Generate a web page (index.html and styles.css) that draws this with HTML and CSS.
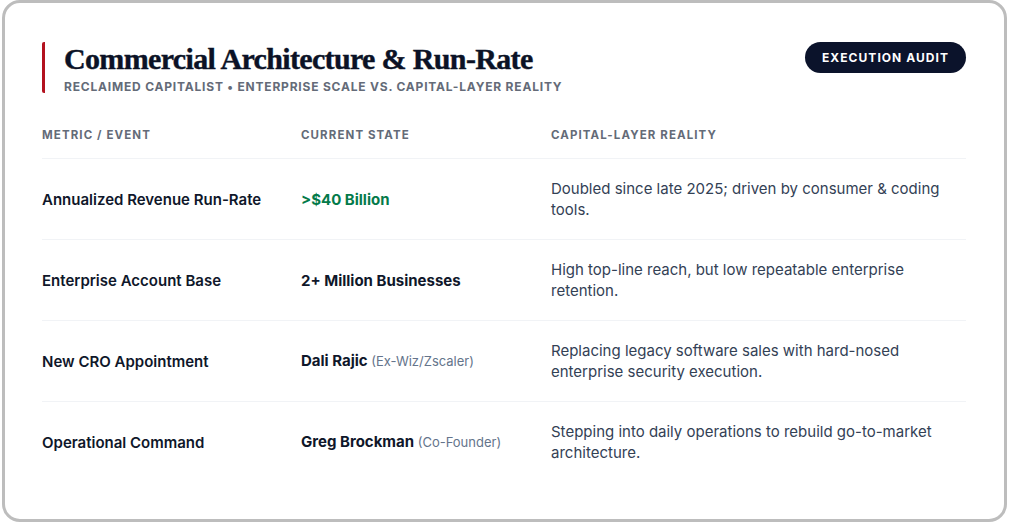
FILE: index.html
```html
<!DOCTYPE html>
<html lang="en">
<head>
<meta charset="utf-8">
<title>Commercial Architecture &amp; Run-Rate</title>
<link rel="stylesheet" href="styles.css">
</head>
<body>
<main class="card">
  <header class="head">
    <div class="titles">
      <h1 class="title">Commercial Architecture &amp; Run-Rate</h1>
      <p class="subtitle">Reclaimed Capitalist • Enterprise Scale vs. Capital-Layer Reality</p>
    </div>
    <span class="badge">Execution Audit</span>
  </header>
  <table class="grid">
    <colgroup>
      <col class="c1"><col class="c2"><col class="c3">
    </colgroup>
    <thead>
      <tr><th>Metric / Event</th><th>Current State</th><th>Capital-Layer Reality</th></tr>
    </thead>
    <tbody>
      <tr>
        <td class="metric">Annualized Revenue Run-Rate</td>
        <td class="state green">&gt;$40 Billion</td>
        <td class="reality">Doubled since late 2025; driven by consumer &amp; coding tools.</td>
      </tr>
      <tr>
        <td class="metric">Enterprise Account Base</td>
        <td class="state">2+ Million Businesses</td>
        <td class="reality">High top-line reach, but low repeatable enterprise retention.</td>
      </tr>
      <tr>
        <td class="metric">New CRO Appointment</td>
        <td class="state">Dali Rajic <span class="note">(Ex-Wiz/Zscaler)</span></td>
        <td class="reality">Replacing legacy software sales with hard-nosed enterprise security execution.</td>
      </tr>
      <tr>
        <td class="metric">Operational Command</td>
        <td class="state">Greg Brockman <span class="note">(Co-Founder)</span></td>
        <td class="reality">Stepping into daily operations to rebuild go-to-market architecture.</td>
      </tr>
    </tbody>
  </table>
</main>
</body>
</html>
```
FILE: styles.css
```css
* { box-sizing: border-box; }
html, body { margin: 0; padding: 0; background: #ffffff; }
body { font-family: Inter, "Noto Sans", sans-serif; color: #0f172a; }

.card {
  margin: 0 2px;
  height: 522px;
  border: 3px solid #bdbdbd;
  border-radius: 18px;
  background: #ffffff;
  padding: 39px 38px 0 37px;
}

.head {
  display: flex;
  justify-content: space-between;
  align-items: flex-start;
}
.titles {
  border-left: 3px solid #b3121f;
  border-radius: 2px;
  padding-left: 19px;
  height: 51px;
}
.title {
  margin: 0;
  font-family: "Liberation Serif", "Times New Roman", serif;
  font-weight: 700;
  font-size: 30px;
  line-height: 34px;
  letter-spacing: -0.65px;
  color: #0b1226;
  -webkit-text-stroke: 0.4px #0b1226;
}
.subtitle {
  margin: 4px 0 0;
  font-size: 12px;
  line-height: 14px;
  font-weight: 700;
  letter-spacing: 0.8px;
  text-transform: uppercase;
  color: #646b78;
}
.badge {
  display: inline-block;
  background: #0b132b;
  color: #ffffff;
  border-radius: 16px;
  height: 31px;
  line-height: 31px;
  padding: 0 17px;
  font-size: 12px;
  font-weight: 700;
  letter-spacing: 1.05px;
  text-transform: uppercase;
}

.grid {
  width: 924px;
  margin-top: 20px;
  border-collapse: collapse;
  table-layout: fixed;
}
.c1 { width: 259px; }
.c2 { width: 250px; }
.c3 { width: 415px; }

th {
  text-align: left;
  font-size: 11.5px;
  font-weight: 700;
  letter-spacing: 1.1px;
  text-transform: uppercase;
  color: #646b78;
  padding: 14px 0 15px;
  line-height: 16px;
  border-bottom: 1px solid #f1f3f6;
}
td {
  padding: 19px 0;
  line-height: 21px;
  vertical-align: middle;
  font-size: 15px;
}
tbody tr + tr td { border-top: 1px solid #f1f3f6; }
tbody tr td { height: 80px; }
tbody tr + tr td { height: 81px; }

.metric { font-weight: 600; color: #0f172a; }
.state { font-weight: 700; color: #0f172a; }
.green { color: #047a4a; }
.note { font-weight: 400; font-size: 13px; color: #64748b; }
.reality { color: #334155; padding-right: 26px; }
```
